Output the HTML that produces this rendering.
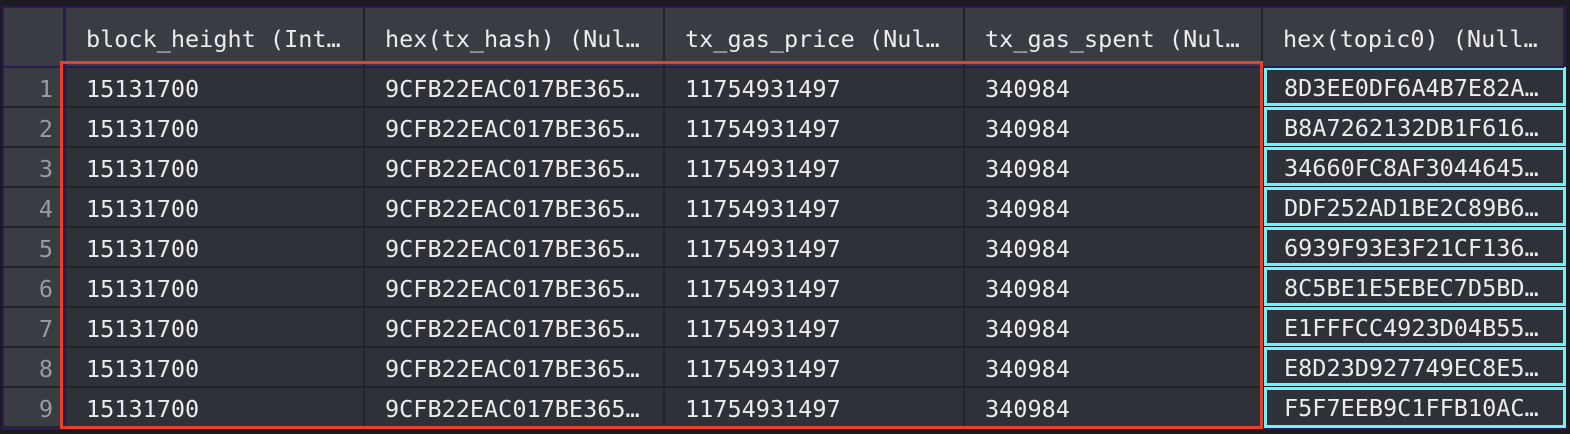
<!DOCTYPE html><html><head><style>
body{margin:0;width:1570px;height:434px;background:#1c1b21;overflow:hidden;font-family:"DejaVu Sans Mono","Liberation Mono",monospace;font-size:23.5px;}
.wrap{position:absolute;left:2px;top:6px;width:1564px;height:424px;background:#222428;box-sizing:border-box;border:2px solid #2e1a52;}
.c{position:absolute;box-sizing:border-box;color:#ececec;white-space:nowrap;padding-left:20px;}
.h{background:#393c43;height:58px;line-height:62px;top:8px;}
.d{background:#2e3138;height:38px;line-height:42px;}
.i{background:#393c43;color:#9a9ca3;text-align:right;padding:0 10px 0 0;}
.cy{position:absolute;box-sizing:border-box;border:3px solid #6ef5fb;background:#2e3138;color:#ececec;padding-left:17px;line-height:36px;height:38px;white-space:nowrap;}
.red{position:absolute;left:60px;top:61px;width:1203px;height:368px;box-sizing:border-box;border:3px solid #e8402b;}
.vl{position:absolute;top:8px;width:2px;height:420px;background:#2e1a52;left:63px;}
.hl{position:absolute;left:4px;top:66px;width:1560px;height:2px;background:#2e1a52;}
</style></head><body><div class="wrap"></div>
<div id="g"></div>
<div class="vl"></div><div class="hl"></div>
<div class="red"></div>
<script>
var g=document.getElementById('g'),h='';
var cols=[[4,59],[66,297],[365,298],[665,298],[965,296],[1263,300]];
var heads=['','block_height (Int…','hex(tx_hash) (Nul…','tx_gas_price (Nul…','tx_gas_spent (Nul…','hex(topic0) (Null…'];
var t0=['8D3EE0DF6A4B7E82A…','B8A7262132DB1F616…','34660FC8AF3044645…','DDF252AD1BE2C89B6…','6939F93E3F21CF136…','8C5BE1E5EBEC7D5BD…','E1FFFCC4923D04B55…','E8D23D927749EC8E5…','F5F7EEB9C1FFB10AC…'];
for(var k=0;k<6;k++){h+='<div class="c h" style="left:'+cols[k][0]+'px;width:'+cols[k][1]+'px">'+heads[k]+'</div>';}
for(var r=0;r<9;r++){var y=68+40*r;
h+='<div class="c d i" style="top:'+y+'px;left:4px;width:59px">'+(r+1)+'</div>';
var v=['15131700','9CFB22EAC017BE365…','11754931497','340984'];
for(var k=1;k<5;k++)h+='<div class="c d" style="top:'+y+'px;left:'+cols[k][0]+'px;width:'+cols[k][1]+'px">'+v[k-1]+'</div>';
h+='<div class="cy" style="top:'+(y-1)+'px;left:1264px;width:302px;height:'+(r==8?41:39)+'px">'+t0[r]+'</div>';}
g.innerHTML=h;
</script></body></html>
